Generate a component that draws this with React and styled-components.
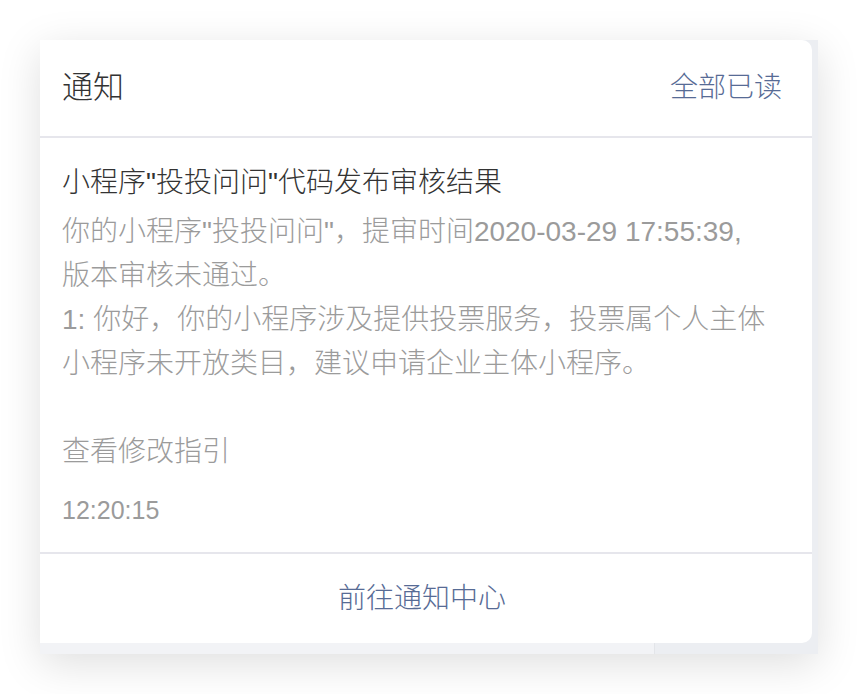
import React from "react";
import styled, { createGlobalStyle } from "styled-components";

const Global = createGlobalStyle`
  html, body { margin: 0; padding: 0; background: #ffffff; }
  body { font-family: "Liberation Sans", "Noto Sans CJK SC", sans-serif; }
`;

const Page = styled.div`
  padding: 40px;
  width: 858px;
  height: 694px;
  box-sizing: border-box;
`;

const Stage = styled.div`
  position: relative;
  width: 778px;
  height: 614px;
  display: grid;
  grid-template-columns: 614px 1fr;
  box-shadow: 0 10px 40px rgba(0, 0, 0, 0.13);
`;

const Pane = styled.div`
  background: ${(p) => (p.$side ? "#eceef2" : "#f2f3f6")};
  border-left: ${(p) => (p.$side ? "1px solid #e3e5e9" : "none")};
`;

const Card = styled.div`
  position: absolute;
  top: 0;
  left: 0;
  width: 772px;
  height: 603px;
  background: #ffffff;
  border-radius: 0 10px 10px 0;
  display: flex;
  flex-direction: column;
  overflow: hidden;
`;

const Header = styled.div`
  height: 96px;
  flex: none;
  display: flex;
  align-items: center;
  justify-content: space-between;
  padding: 0 30px 0 22px;
  border-bottom: 2px solid #e6e6ec;
`;

const HeaderTitle = styled.div`
  font-size: 31px;
  font-weight: 300;
  color: #333333;
  line-height: 44px;
`;

const LinkText = styled.div`
  font-size: 28px;
  font-weight: 300;
  color: #576b95;
  line-height: 44px;
`;

const Body = styled.div`
  flex: 1;
  padding: 23px 22px 20px;
  border-bottom: 2px solid #e6e6ec;
  display: flex;
  flex-direction: column;
`;

const MsgTitle = styled.div`
  font-size: 28px;
  font-weight: 300;
  line-height: 44px;
  color: #333333;
  white-space: nowrap;
`;

const MsgText = styled.div`
  margin-top: 5px;
  font-size: 28px;
  font-weight: 300;
  line-height: 44px;
  color: #9b9b9b;
  white-space: pre;
`;

const Time = styled.div`
  margin-top: 14px;
  font-size: 25px;
  line-height: 44px;
  color: #9b9b9b;
`;

const Footer = styled.div`
  height: 89px;
  flex: none;
  display: flex;
  align-items: center;
  justify-content: center;
  padding-right: 8px;
`;

const lines = [
  "你的小程序\"投投问问\"，提审时间2020-03-29 17:55:39,",
  "版本审核未通过。",
  "1: 你好，你的小程序涉及提供投票服务，投票属个人主体",
  "小程序未开放类目，建议申请企业主体小程序。",
  "",
  "查看修改指引",
];

export default function App() {
  return (
    <Page>
      <Global />
      <Stage>
        <Pane />
        <Pane $side />
        <Card>
          <Header>
            <HeaderTitle>通知</HeaderTitle>
            <LinkText>全部已读</LinkText>
          </Header>
          <Body>
            <MsgTitle>小程序"投投问问"代码发布审核结果</MsgTitle>
            <MsgText>{lines.join("\n")}</MsgText>
            <Time>12:20:15</Time>
          </Body>
          <Footer>
            <LinkText>前往通知中心</LinkText>
          </Footer>
        </Card>
      </Stage>
    </Page>
  );
}
